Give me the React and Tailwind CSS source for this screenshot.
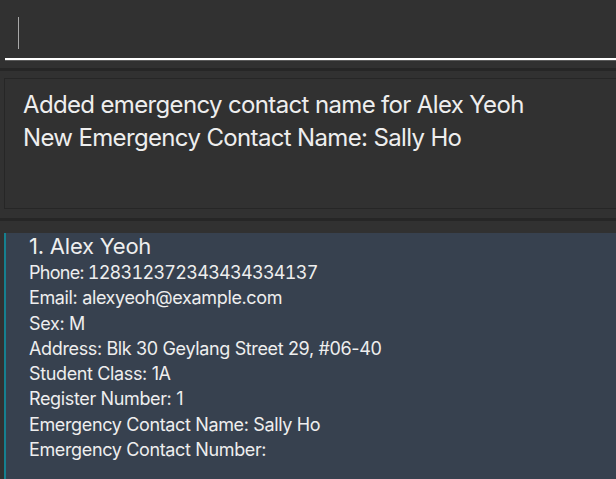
export default function App() {
  const fields = [
    { text: "Phone: 128312372343434334137", num: true },
    { text: "Email: alexyeoh@example.com" },
    { text: "Sex: M" },
    { text: "Address: Blk 30 Geylang Street 29, #06-40" },
    { text: "Student Class: 1A" },
    { text: "Register Number: 1" },
    { text: "Emergency Contact Name: Sally Ho" },
    { text: "Emergency Contact Number:" },
  ];
  return (
    <div
      className="w-[616px] h-[479px] overflow-hidden bg-[#313131] flex flex-col text-[#eeeeee]"
      style={{ fontFamily: "Inter, 'Noto Sans', sans-serif" }}
    >
      {/* command box */}
      <div className="h-[68px] shrink-0 pl-[5px] pt-[17px]">
        <div className="ml-[13px] w-px h-[32px] bg-[#a8a8a8]" />
        <div className="mt-[9px] h-[2px] bg-white" />
        <div className="h-px bg-[#5a5a5a]" />
      </div>
      <div className="h-[3px] shrink-0 bg-[#262626]" />

      {/* result display */}
      <div className="h-[147px] shrink-0 pt-[7px] pl-[4px]">
        <div className="h-[131px] border border-r-0 border-[#262626] bg-[#313131] pl-[18px] pt-[9px] text-[24px] leading-[33px] tracking-[-0.027em]">
          <div>Added emergency contact name for Alex Yeoh</div>
          <div>New Emergency Contact Name: Sally Ho</div>
        </div>
      </div>
      <div className="h-[3px] shrink-0 bg-[#262626]" />

      {/* list */}
      <div className="flex-1 pt-[12px] pl-[4px] bg-[#313131]">
        <div className="h-full bg-[#37414f] border-l-2 border-[#16808f] pl-[23px] pt-px">
          <div className="text-[22px] leading-[24px] tracking-[-0.01em] mb-[2px]">1. Alex Yeoh</div>
          {fields.map((f) => (
            <div
              key={f.text}
              className={
                f.num
                  ? "text-[18px] leading-[25.3px] tracking-[-0.04em] tabular-nums"
                  : "text-[18px] leading-[25.3px] tracking-[-0.02em]"
              }
            >
              {f.text}
            </div>
          ))}
        </div>
      </div>
    </div>
  );
}
